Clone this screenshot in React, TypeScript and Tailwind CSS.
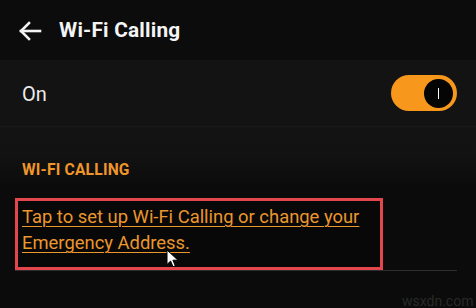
const BackArrow = () => (
  <svg width="24" height="20" viewBox="0 0 24 20" fill="none" stroke="#f2f2f2" strokeWidth="2.6" strokeLinecap="square">
    <path d="M3 10h19" />
    <path d="M11 2L3 10l8 8" />
  </svg>
)

const Cursor = () => (
  <svg width="13" height="19" viewBox="0 0 13 19" className="absolute left-[166px] top-[249px]">
    <path d="M1 1v14.5l3.6-3.4 2.4 5.6 2.3-1-2.4-5.5H12z" fill="#fff" stroke="#000" strokeWidth="1" strokeLinejoin="round" />
  </svg>
)

const App = () => {
  return (
    <div className="relative w-[476px] h-[308px] overflow-hidden bg-[#0a0b0a] font-['Roboto',sans-serif]">
      {/* header */}
      <header className="h-[60px] flex items-center gap-[17px] pl-[18px] pt-[1px] bg-[#0b0c0b]">
        <BackArrow />
        <h1 className="text-[20.8px] font-bold text-[#f4f4f4] tracking-[0.2px]">Wi-Fi Calling</h1>
      </header>

      {/* on / off row */}
      <div className="h-[67px] flex items-center justify-between pl-[22px] pr-[19px] bg-[#121312] border-b border-[#181918]">
        <span className="text-[20px] text-[#ececec] pt-[2px]">On</span>
        <div className="w-[66px] h-[36px] rounded-full bg-[#f7981c] flex items-center justify-end pr-[4px]">
          <div className="w-[29px] h-[29px] rounded-full bg-[#050505] flex items-center justify-center">
            <div className="w-[1.5px] h-[11px] bg-white" />
          </div>
        </div>
      </div>

      {/* section header */}
      <div className="h-[57px] pt-[31px] pl-[22px] bg-gradient-to-b from-[#121312] via-[#111211] to-[#0b0c0b]">
        <span className="text-[15.6px] font-bold text-[#f0952b] tracking-[0.2px]">WI-FI CALLING</span>
      </div>

      {/* link */}
      <div className="mt-[14px] ml-[15px] w-[368px] h-[72px] border-[3px] border-[#e4464e] pl-[4px] pt-[3px] bg-[#070807]">
        <a className="text-[18.4px] leading-[25px] text-[#ec962e] underline decoration-1 underline-offset-[3px] cursor-pointer">
          Tap to set up Wi-Fi Calling or change your Emergency Address.
        </a>
      </div>
      <div className="ml-[15px] w-[442px] h-px bg-[#2c2d2c]" />

      <span className="absolute left-[402px] top-[291px] text-[14px] text-[#282928]">wsxdn.com</span>
      <Cursor />
    </div>
  )
}

export default App
